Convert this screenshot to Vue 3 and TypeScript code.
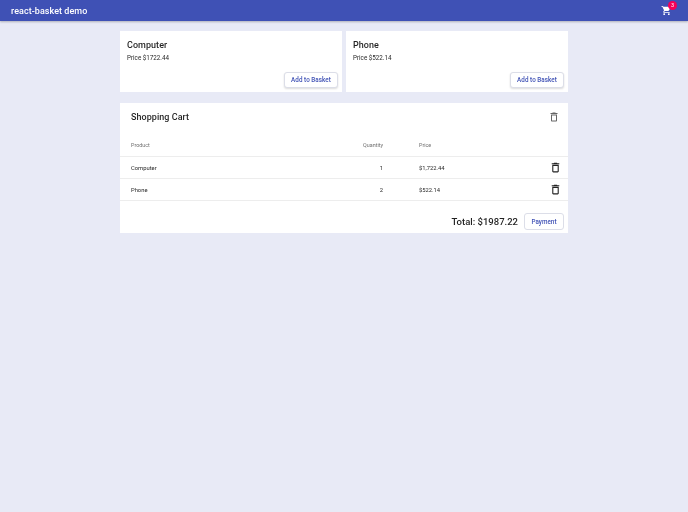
<script setup lang="ts">
interface Product { name: string; price: string }
interface Row { name: string; qty: number; price: string }
const products: Product[] = [
  { name: 'Computer', price: 'Price $1722.44' },
  { name: 'Phone', price: 'Price $522.14' },
]
const rows: Row[] = [
  { name: 'Computer', qty: 1, price: '$1,722.44' },
  { name: 'Phone', qty: 2, price: '$522.14' },
]
const trash = 'M6 19c0 1.1.9 2 2 2h8c1.1 0 2-.9 2-2V7H6v12zM8 9h8v10H8V9zm7.5-5l-1-1h-5l-1 1H5v2h14V4z'
</script>

<template>
  <div class="page">
    <header class="bar">
      <span class="brand">react-basket demo</span>
      <span class="cart">
        <svg width="11" height="11" viewBox="0 0 24 24" fill="#fff"><path d="M7 18c-1.1 0-1.99.9-1.99 2S5.900 22 7 22s2-.9 2-2-.9-2-2-2zM1 2v2h2l3.600 7.590-1.350 2.450c-.16.28-.25.61-.25.96 0 1.100.9 2 2 2h12v-2H7.420c-.14 0-.25-.11-.25-.25l.03-.12.9-1.630h7.450c.75 0 1.410-.41 1.750-1.030l3.580-6.490A1 1 0 0 0 20 4H5.210l-.94-2H1zm16 16c-1.100 0-1.990.9-1.990 2s.89 2 1.990 2 2-.9 2-2-.9-2-2-2z"/></svg>
        <span class="badge">3</span>
      </span>
    </header>
    <main class="main">
      <section class="products">
        <article v-for="p in products" :key="p.name" class="card">
          <h2 class="name">{{ p.name }}</h2>
          <p class="price">{{ p.price }}</p>
          <div class="actions"><button class="btn basket">Add to Basket</button></div>
        </article>
      </section>
      <section class="panel">
        <div class="panel-head">
          <h2 class="title">Shopping Cart</h2>
          <svg width="12" height="12" viewBox="0 0 24 24" fill="#666"><path :d="trash"/></svg>
        </div>
        <div class="row head">
          <span class="c-name">Product</span>
          <span class="c-qty">Quantity</span>
          <span class="c-price">Price</span>
        </div>
        <div v-for="r in rows" :key="r.name" class="row item">
          <span class="c-name">{{ r.name }}</span>
          <span class="c-qty">{{ r.qty }}</span>
          <span class="c-price">{{ r.price }}</span>
          <svg class="del" width="13" height="13" viewBox="0 0 24 24" fill="#222"><path :d="trash"/></svg>
        </div>
        <div class="foot">
          <span class="total">Total: $1987.22</span>
          <button class="btn pay">Payment</button>
        </div>
      </section>
    </main>
  </div>
</template>

<style>
html, body { margin: 0; background: #e8eaf6; }
</style>

<style scoped>
.page { min-height: 512px; font-family: Roboto, "Liberation Sans", sans-serif; color: rgba(0,0,0,.87); will-change: transform; }
.bar { height: 21px; background: #3f51b5; color: #fff; display: flex; align-items: center; justify-content: space-between; padding: 0 16px 0 11px; box-shadow: 0 1px 2px rgba(0,0,0,.25); }
.brand { font-size: 8.960px; font-weight: 500; letter-spacing: .07px; }
.cart { position: relative; display: flex; }
.badge { position: absolute; top: -4px; right: -5px; width: 9px; height: 9px; border-radius: 50%; background: #f50057; color: #fff; font-size: 5.400px; line-height: 9px; text-align: center; }
.main { width: 448px; margin: 0 auto; padding-top: 10px; }
.products { display: grid; grid-template-columns: 1fr 1fr; gap: 4px; }
.card { background: #fff; height: 61px; padding: 8px 4px 4px 7px; box-sizing: border-box; display: flex; flex-direction: column; }
.name { margin: 0; font-size: 8.960px; font-weight: 500; letter-spacing: .07px; line-height: 12px; }
.price { margin: 2px 0 0; font-size: 6.270px; line-height: 11px; }
.actions { margin-top: auto; display: flex; justify-content: flex-end; }
.btn { background: #fff; color: #3f51b5; font: 500 6.270px Roboto, sans-serif; letter-spacing: .05px; border: 1px solid #dcdee8; border-radius: 3px; padding: 0; }
.basket { width: 54px; height: 16px; box-shadow: 0 1px 2px rgba(0,0,0,.14); }
.panel { margin-top: 11px; background: #fff; height: 130px; display: flex; flex-direction: column; }
.panel-head { height: 28px; padding: 0 8px 0 11px; display: flex; align-items: center; justify-content: space-between; }
.title { margin: 0; font-size: 8.960px; font-weight: 500; letter-spacing: .07px; }
.row { display: flex; align-items: center; position: relative; padding-left: 11px; font-size: 5.820px; border-bottom: 1px solid #ededed; }
.head { height: 26px; padding-top: 2px; box-sizing: border-box; font-size: 5.380px; color: rgba(0,0,0,.6); }
.item { height: 22px; box-sizing: border-box; }
.c-name { width: 203px; }
.c-qty { width: 49px; text-align: right; }
.c-price { margin-left: 36px; }
.del { position: absolute; right: 6px; top: 4px; }
.foot { flex: 1; display: flex; align-items: flex-end; justify-content: flex-end; padding: 0 4px 3px 0; gap: 6px; }
.total { font-size: 9.500px; font-weight: 500; line-height: 17px; }
.pay { width: 40px; height: 17px; }
</style>
